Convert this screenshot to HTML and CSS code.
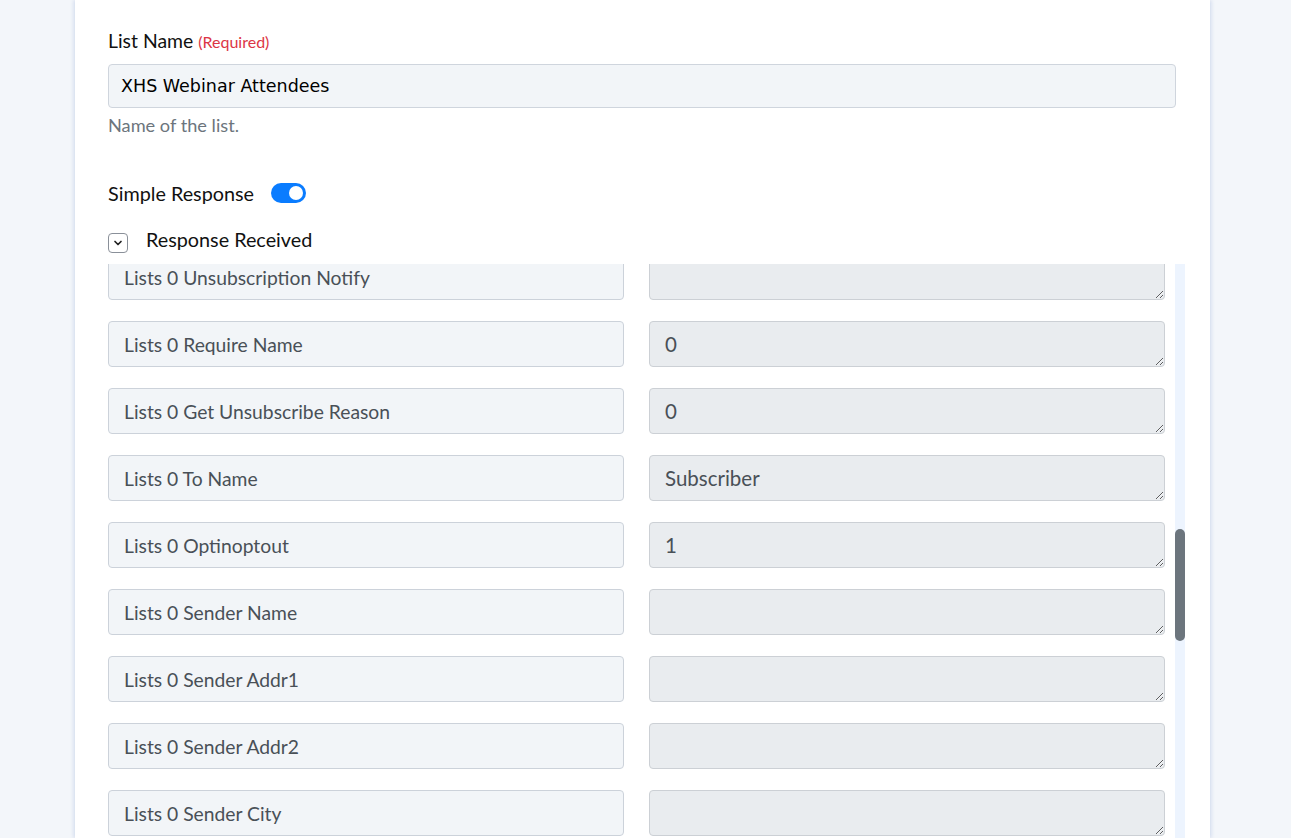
FILE: index.html
```html
<!DOCTYPE html>
<html lang="en">
<head>
<meta charset="utf-8">
<title>List Settings</title>
<link rel="stylesheet" href="styles.css">
</head>
<body>
<main class="card">
  <div class="field">
    <label class="field-label" for="list-name">List Name <span class="required">(Required)</span></label>
    <input class="text-input" id="list-name" type="text" value="XHS Webinar Attendees">
    <div class="help">Name of the list.</div>
  </div>

  <div class="switch-row">
    <span class="switch-label">Simple Response</span>
    <span class="switch on"><span class="knob"></span></span>
  </div>

  <div class="section-head">
    <span class="chevron-box">
      <svg width="10" height="10" viewBox="0 0 10 10"><path d="M2 3.5 L5 6.5 L8 3.5" fill="none" stroke="#222" stroke-width="1.7" stroke-linecap="round" stroke-linejoin="round"/></svg>
    </span>
    <span class="section-title">Response Received</span>
  </div>

  <div class="response-wrap">
    <div class="response-list" id="response-list">
      <div class="pair"><input class="key" readonly value="Lists 0 Id"><textarea class="val">18745</textarea></div>
      <div class="pair"><input class="key" readonly value="Lists 0 Name"><textarea class="val">XHS Webinar Attendees</textarea></div>
      <div class="pair"><input class="key" readonly value="Lists 0 Description"><textarea class="val"></textarea></div>
      <div class="pair"><input class="key" readonly value="Lists 0 From Name"><textarea class="val">XHS</textarea></div>
      <div class="pair"><input class="key" readonly value="Lists 0 From Email"><textarea class="val"></textarea></div>
      <div class="pair"><input class="key" readonly value="Lists 0 Reply To"><textarea class="val"></textarea></div>
      <div class="pair"><input class="key" readonly value="Lists 0 Created"><textarea class="val"></textarea></div>
      <div class="pair"><input class="key" readonly value="Lists 0 Modified"><textarea class="val"></textarea></div>
      <div class="pair"><input class="key" readonly value="Lists 0 Status"><textarea class="val">1</textarea></div>
      <div class="pair"><input class="key" readonly value="Lists 0 Active Count"><textarea class="val">0</textarea></div>
      <div class="pair"><input class="key" readonly value="Lists 0 Unsubscribed Count"><textarea class="val">0</textarea></div>
      <div class="pair"><input class="key" readonly value="Lists 0 Bounced Count"><textarea class="val">0</textarea></div>
      <div class="pair"><input class="key" readonly value="Lists 0 Confirm Optin"><textarea class="val">0</textarea></div>
      <div class="pair"><input class="key" readonly value="Lists 0 Welcome Email"><textarea class="val">0</textarea></div>
      <div class="pair"><input class="key" readonly value="Lists 0 Goodbye Email"><textarea class="val">0</textarea></div>
      <div class="pair"><input class="key" readonly value="Lists 0 Subscribe Redirect"><textarea class="val"></textarea></div>
      <div class="pair"><input class="key" readonly value="Lists 0 Unsubscribe Redirect"><textarea class="val"></textarea></div>
      <div class="pair"><input class="key" readonly value="Lists 0 Notify Email"><textarea class="val"></textarea></div>
      <div class="pair"><input class="key" readonly value="Lists 0 Subscription Notify"><textarea class="val"></textarea></div>
      <div class="pair"><input class="key" readonly value="Lists 0 Language"><textarea class="val">en</textarea></div>
      <div class="pair"><input class="key" readonly value="Lists 0 Unsubscription Notify"><textarea class="val"></textarea></div>
      <div class="pair"><input class="key" readonly value="Lists 0 Require Name"><textarea class="val">0</textarea></div>
      <div class="pair"><input class="key" readonly value="Lists 0 Get Unsubscribe Reason"><textarea class="val">0</textarea></div>
      <div class="pair"><input class="key" readonly value="Lists 0 To Name"><textarea class="val">Subscriber</textarea></div>
      <div class="pair"><input class="key" readonly value="Lists 0 Optinoptout"><textarea class="val">1</textarea></div>
      <div class="pair"><input class="key" readonly value="Lists 0 Sender Name"><textarea class="val"></textarea></div>
      <div class="pair"><input class="key" readonly value="Lists 0 Sender Addr1"><textarea class="val"></textarea></div>
      <div class="pair"><input class="key" readonly value="Lists 0 Sender Addr2"><textarea class="val"></textarea></div>
      <div class="pair"><input class="key" readonly value="Lists 0 Sender City"><textarea class="val"></textarea></div>
      <div class="pair"><input class="key" readonly value="Lists 0 Sender State"><textarea class="val"></textarea></div>
      <div class="pair"><input class="key" readonly value="Lists 0 Sender Zip"><textarea class="val"></textarea></div>
      <div class="pair"><input class="key" readonly value="Lists 0 Sender Country"><textarea class="val"></textarea></div>
      <div class="pair"><input class="key" readonly value="Lists 0 Sender Phone"><textarea class="val"></textarea></div>
      <div class="pair"><input class="key" readonly value="Lists 0 Sender Email"><textarea class="val"></textarea></div>
      <div class="pair"><input class="key" readonly value="Lists 0 Sender Reply To"><textarea class="val"></textarea></div>
      <div class="pair"><input class="key" readonly value="Lists 0 Company Name"><textarea class="val"></textarea></div>
      <div class="pair"><input class="key" readonly value="Lists 0 Company Url"><textarea class="val"></textarea></div>
      <div class="pair"><input class="key" readonly value="Lists 0 Permission Reminder"><textarea class="val"></textarea></div>
      <div class="pair"><input class="key" readonly value="Lists 0 Double Optin"><textarea class="val">0</textarea></div>
      <div class="pair"><input class="key" readonly value="Lists 0 Member Count"><textarea class="val">0</textarea></div>
      <div class="pair"><input class="key" readonly value="Lists 0 Visibility"><textarea class="val">private</textarea></div>
      <div class="pair"><input class="key" readonly value="Lists 0 Owner Id"><textarea class="val"></textarea></div>
      <div class="pair"><input class="key" readonly value="Total Count"><textarea class="val">1</textarea></div>
      <div class="pair"><input class="key" readonly value="Status"><textarea class="val">success</textarea></div>
    </div>
    <div class="scroll-track"><div class="scroll-thumb" id="scroll-thumb"></div></div>
  </div>
</main>
<script src="script.js"></script>
</body>
</html>
```

FILE: styles.css
```css
* { box-sizing: border-box; }

html, body {
  margin: 0;
  height: 100%;
  overflow: hidden;
}

body {
  background: #f3f6fa;
  font-family: "Lato", "Noto Sans", sans-serif;
  color: #212529;
}

.card {
  margin-left: 75px;
  width: 1135px;
  height: 100%;
  background: #fff;
  padding: 29px 34px 0 33px;
  display: flex;
  flex-direction: column;
  box-shadow: -2px 0 3px rgba(190, 205, 230, 0.45), 2px 0 3px rgba(190, 205, 230, 0.45);
}

.field {
  display: flex;
  flex-direction: column;
}

.field-label {
  display: flex;
  align-items: baseline;
  gap: 5px;
  height: 24px;
  font-size: 19.4px;
  line-height: 24px;
  color: #111;
  margin-bottom: 11px;
}

.required {
  font-size: 16px;
  line-height: 16px;
  color: #dc3545;
}

.text-input {
  height: 44px;
  width: 100%;
  border: 1px solid #cfd5dd;
  border-radius: 4px;
  background: #f2f5f8;
  padding: 0 12px 0 12px;
  font-family: "DejaVu Sans", sans-serif;
  font-size: 17.5px;
  color: #000;
  outline: none;
}

.help {
  margin-top: 5px;
  font-size: 18.2px;
  line-height: 24px;
  color: #6c757d;
}

.switch-row {
  margin-top: 44px;
  height: 24px;
  display: flex;
  align-items: center;
  gap: 17px;
}

.switch-label,
.section-title {
  font-size: 19.8px;
  line-height: 24px;
  color: #111;
}

.switch {
  width: 35px;
  height: 20px;
  border-radius: 10px;
  background: #0a7cff;
  position: relative;
  display: inline-block;
}

.switch .knob {
  position: absolute;
  top: 3px;
  right: 3px;
  width: 14px;
  height: 14px;
  border-radius: 50%;
  background: #fff;
}

.section-head {
  margin-top: 22px;
  height: 24px;
  display: flex;
  align-items: flex-start;
  gap: 18px;
}

.chevron-box {
  margin-top: 6px;
  width: 20px;
  height: 20px;
  flex: 0 0 20px;
  border: 1px solid #8a9099;
  border-radius: 4px;
  display: flex;
  align-items: center;
  justify-content: center;
  background: #fff;
}

.response-wrap {
  position: relative;
  margin-top: 13px;
  margin-right: -9px;
  flex: 1;
  min-height: 0;
  display: flex;
}

.response-list {
  flex: 1;
  overflow-y: scroll;
  padding-right: 20px;
  display: flex;
  flex-direction: column;
  gap: 21px;
  scrollbar-width: none;
}

.response-list::-webkit-scrollbar {
  display: none;
}

.scroll-track {
  position: absolute;
  top: 0;
  right: 0;
  bottom: 0;
  width: 10px;
  background: #edf4fe;
}

.scroll-thumb {
  position: absolute;
  left: 0;
  width: 10px;
  border-radius: 5px;
  background: #6c757d;
}

.pair {
  display: flex;
  gap: 25px;
  flex: 0 0 46px;
}

.key,
.val {
  width: 516px;
  height: 46px;
  border-radius: 4px;
  font-family: "Lato", "Noto Sans", sans-serif;
  color: #495057;
  padding: 0 15px;
  outline: none;
  margin: 0;
}

.key {
  font-size: 19.3px;
  background: #f2f5f8;
  border: 1px solid #ccd2da;
}

.val {
  font-size: 20.5px;
  background: #e9ecef;
  border: 1px solid #ccd0d5;
  padding-top: 10px;
  line-height: 24px;
  resize: both;
  overflow: hidden;
}
```

FILE: script.js
```js
var list = document.getElementById('response-list');
var thumb = document.getElementById('scroll-thumb');
list.scrollTop = 1350;

function syncThumb() {
  var view = list.clientHeight;
  var total = list.scrollHeight;
  var h = view * view / total;
  var top = list.scrollTop / total * view;
  thumb.style.height = h + 'px';
  thumb.style.top = top + 'px';
}

syncThumb();
list.addEventListener('scroll', syncThumb);
```
